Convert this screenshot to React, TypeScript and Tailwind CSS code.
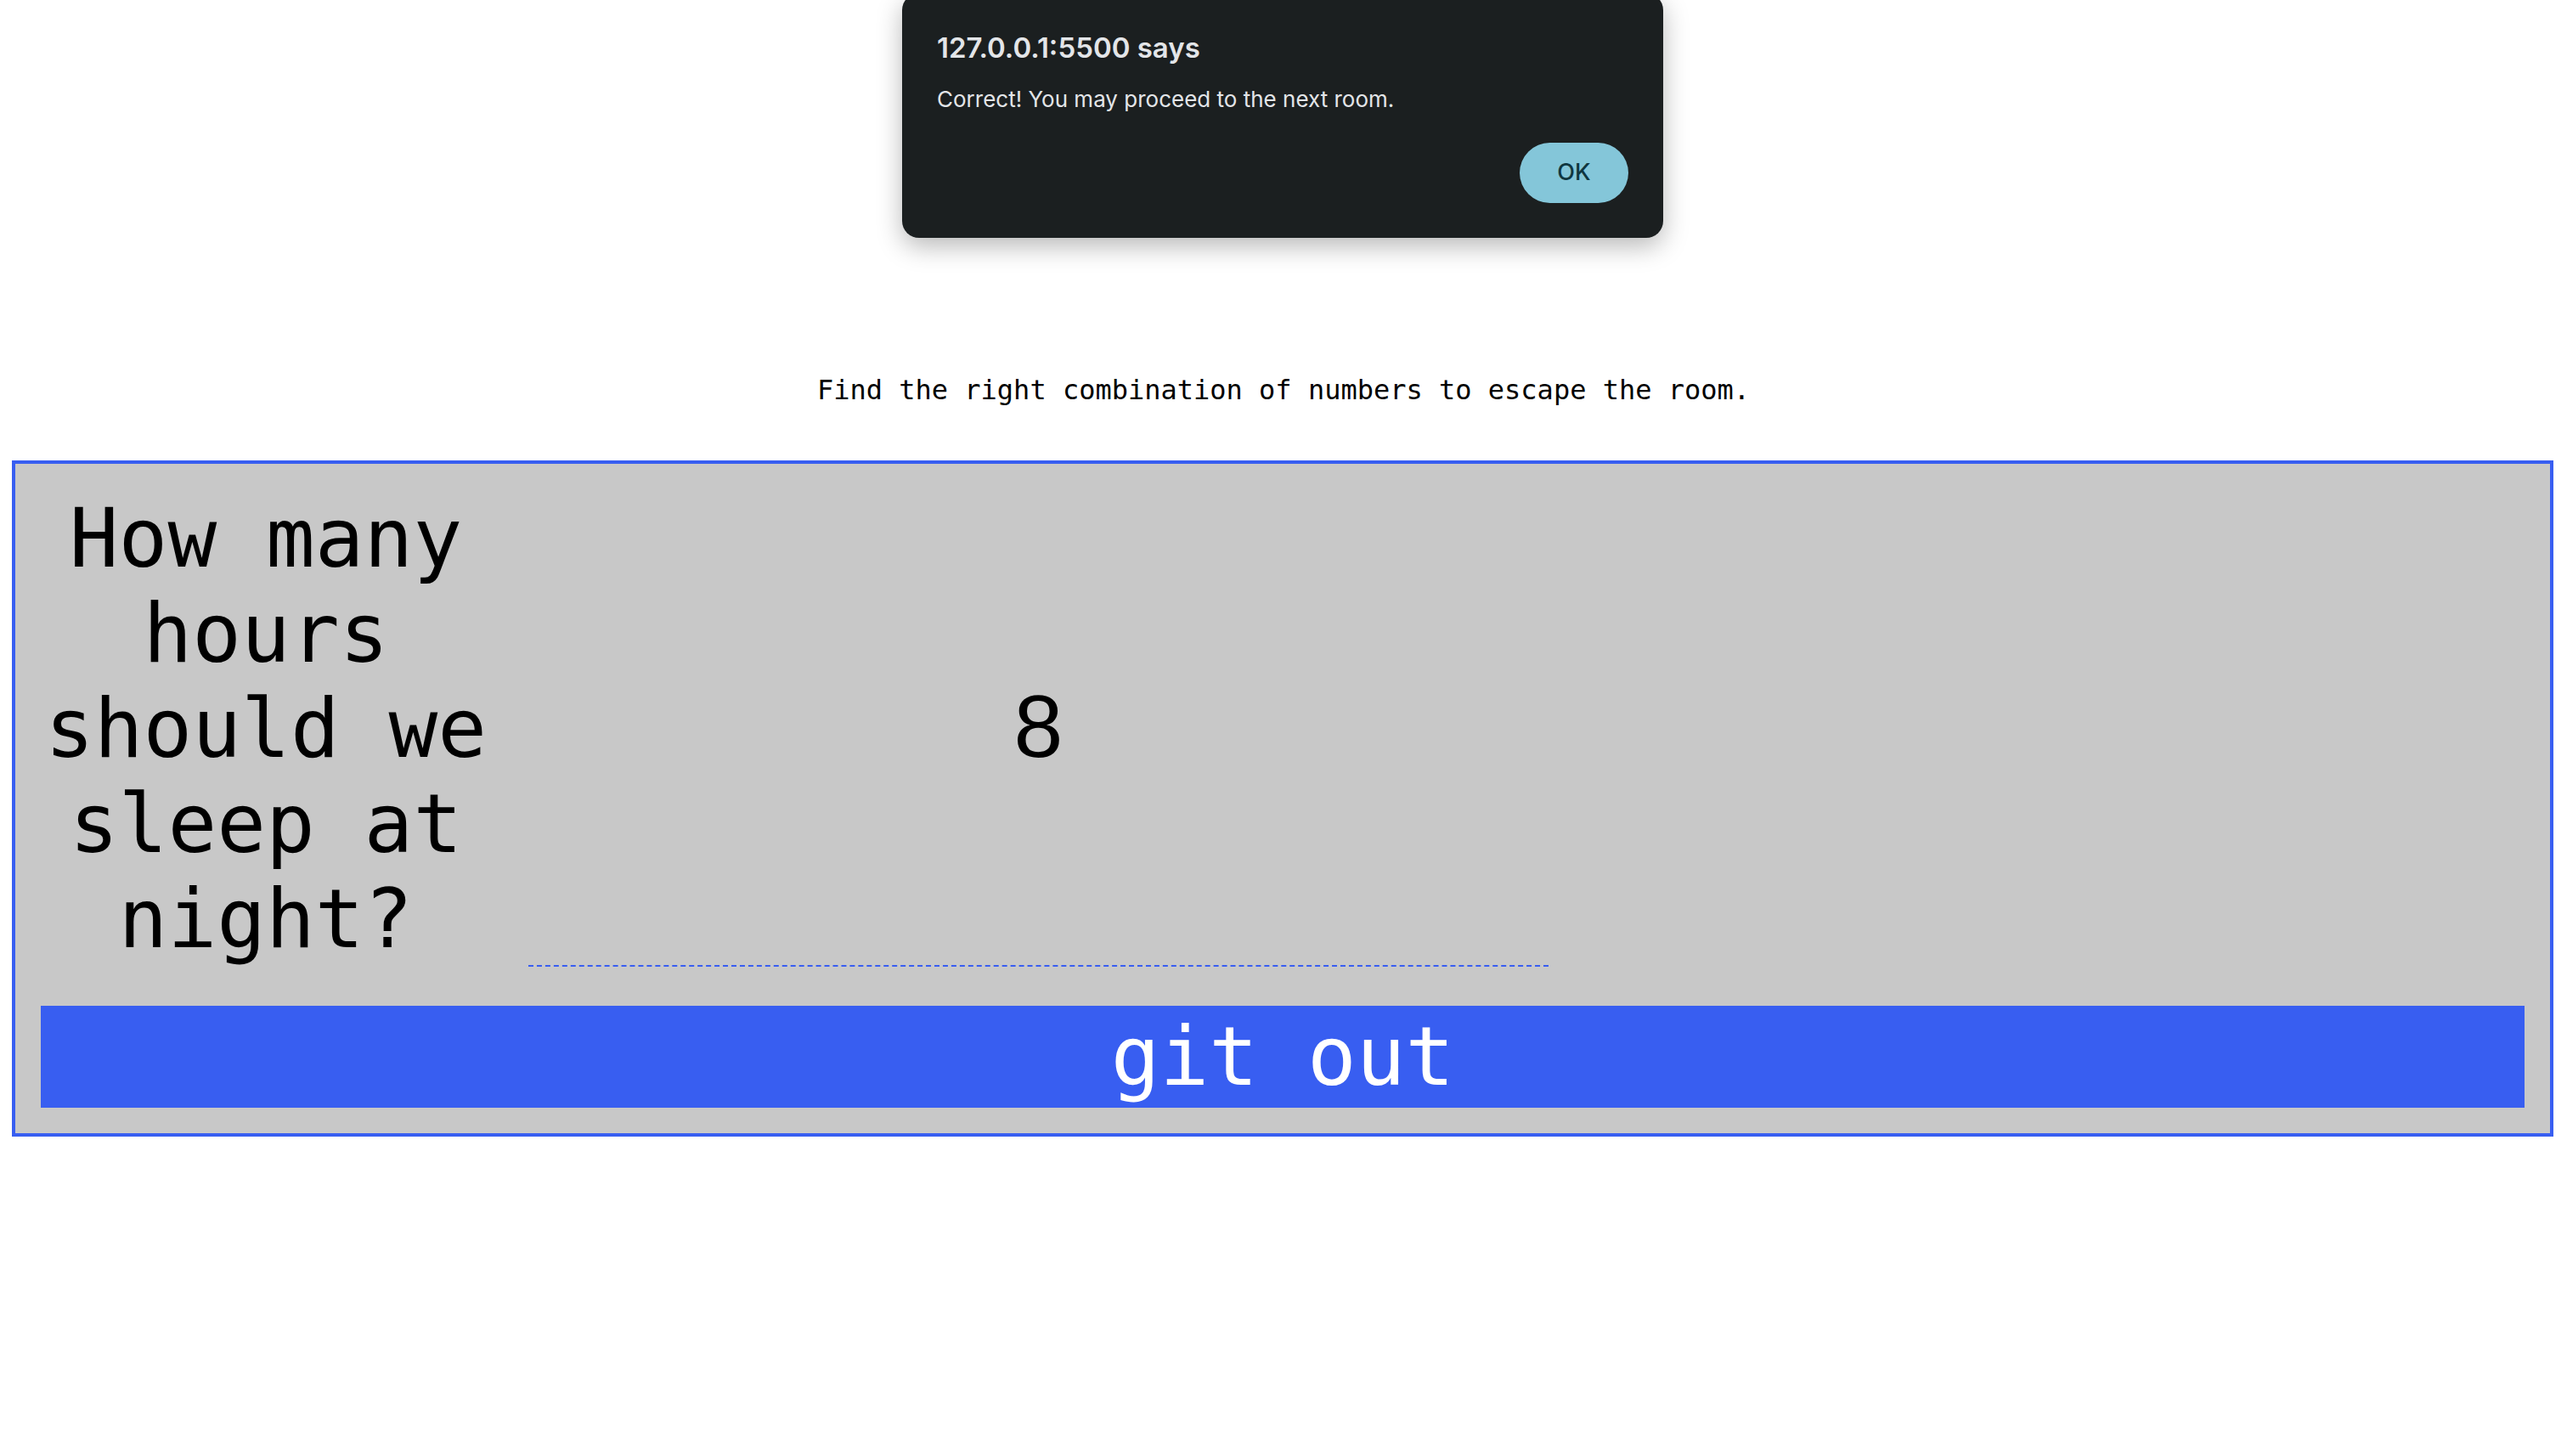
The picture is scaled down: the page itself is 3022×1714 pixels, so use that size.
import { useState } from "react";

// the fake browser alert that sits on top of the page
function AlertBox() {
  return (
    <div className="absolute left-[1062px] top-[-8px] w-[896px] rounded-[20px] bg-[#1b1f20] px-[41px] pt-[44px] pb-[41px] font-['Inter','Noto_Sans',sans-serif] shadow-[0_10px_30px_rgba(0,0,0,0.28)]">
      <div className="text-[33px] leading-[40px] font-semibold text-[#e3e5e8]">
        127.0.0.1:5500 says
      </div>
      <div className="mt-[24px] text-[26px] leading-[34px] text-[#e3e5e8]">
        Correct! You may proceed to the next room.
      </div>
      <div className="mt-[34px] flex justify-end">
        <button
          type="button"
          className="h-[71px] w-[128px] rounded-full bg-[#84c6d9] text-[27px] font-medium text-[#0f3640]"
        >
          OK
        </button>
      </div>
    </div>
  );
}

export default function App() {
  // answer typed into the box
  const [answer, setAnswer] = useState("8");

  return (
    <div className="relative min-h-screen bg-white font-['DejaVu_Sans_Mono',monospace] text-black">
      <AlertBox />

      <div className="pt-[440px]">
        <p className="text-center text-[32px] leading-[normal]">
          Find the right combination of numbers to escape the room.
        </p>

        {/* the riddle form */}
        <form
          onSubmit={(e) => e.preventDefault()}
          className="mt-[64px] ml-[14px] w-[2992px] border-4 border-[#385ef1] bg-[#c8c8c8] px-[30px] pt-[32px] pb-[30px]"
        >
          <div className="flex items-stretch">
            <label
              htmlFor="answer"
              className="w-[530px] shrink-0 text-center text-[96px] leading-[normal]"
            >
              How many hours should we sleep at night?
            </label>
            <input
              id="answer"
              type="text"
              value={answer}
              onChange={(e) => setAnswer(e.target.value)}
              className="ml-[44px] w-[1201px] shrink-0 border-b-2 border-dashed border-[#385ef1] bg-transparent pb-[4px] text-center font-['Liberation_Sans',Arial,sans-serif] text-[104px] text-black outline-none"
            />
          </div>

          <button
            type="submit"
            className="mt-[46px] flex h-[120px] w-full items-center justify-center bg-[#385ef1] text-[96px] leading-[normal] text-white"
          >
            git out
          </button>
        </form>
      </div>
    </div>
  );
}
